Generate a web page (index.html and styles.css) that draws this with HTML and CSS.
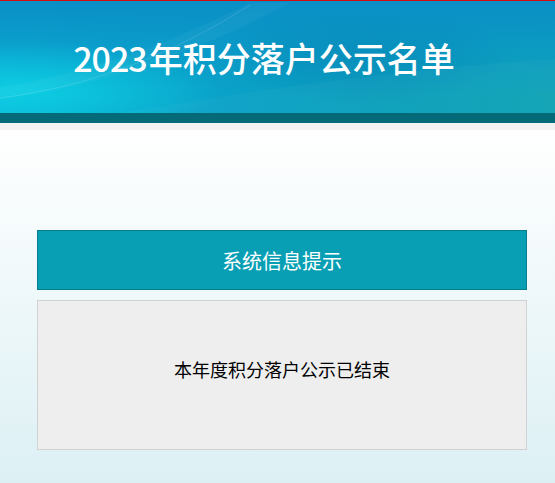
FILE: index.html
```html
<!DOCTYPE html>
<html lang="zh-CN">
<head>
  <meta charset="UTF-8">
  <title>2023年积分落户公示名单</title>
  <link rel="stylesheet" href="styles.css">
</head>
<body>
  <div class="banner">
    <svg class="swoosh" width="555" height="112" viewBox="0 0 555 112" preserveAspectRatio="none">
      <path d="M0 86 C90 72 170 42 250 2 L290 2 C210 44 120 82 0 98 Z" fill="rgba(255,255,255,0.04)"/>
      <path d="M0 97 C90 86 175 52 250 4" stroke="rgba(255,255,255,0.12)" stroke-width="1" fill="none"/>
      <path d="M120 112 C240 92 380 70 555 58 L555 112 Z" fill="rgba(255,255,255,0.03)"/>
    </svg>
    <h1><span class="num">2023</span>年积分落户公示名单</h1>
  </div>
  <div class="banner-bar"></div>
  <div class="banner-gap"></div>

  <div class="main">
    <div class="notice">
      <div class="notice-title">系统信息提示</div>
      <div class="notice-body">本年度积分落户公示已结束</div>
    </div>
  </div>
</body>
</html>
```

FILE: styles.css
```css
html, body {
  height: 100%;
}
body {
  margin: 0;
  font-family: "Noto Sans CJK SC", "Noto Sans", sans-serif;
  background: linear-gradient(to bottom, #ffffff 130px, #dcf0f4 100%);
}
.banner {
  position: relative;
  height: 112px;
  border-top: 1px solid #d80c0c;
  background:
    radial-gradient(ellipse 200px 50px at 20px 90px, rgba(14, 212, 230, 0.8), rgba(14, 212, 230, 0) 100%),
    radial-gradient(ellipse 150px 50px at 360px 55px, rgba(6, 128, 180, 0.45), rgba(6, 128, 180, 0) 100%),
    linear-gradient(to bottom, #0a8fc6 0%, rgba(10, 150, 200, 0.6) 45%, rgba(10, 180, 210, 0) 85%),
    linear-gradient(to right, #0ab4d6 0%, #0aa2c8 40%, #0a9fba 70%, #0ea3b5 100%);
  display: flex;
  align-items: center;
  justify-content: center;
  padding-right: 27px;
  overflow: hidden;
}
.swoosh {
  position: absolute;
  left: 0;
  top: 0;
}
.banner h1 {
  position: relative;
  margin: 0;
  padding-top: 0;
  font-size: 34px;
  font-weight: 500;
  color: #fff;
}
.banner h1 .num {
  letter-spacing: -1px;
  margin-right: 2px;
}
.banner-bar {
  height: 10px;
  background: #046a78;
}
.banner-gap {
  height: 7px;
  background: #f2f2f2;
}
.main {
  padding: 100px 28px 0 37px;
}
.notice {
  width: 490px;
}
.notice-title {
  height: 58px;
  border: 1px solid #077d8d;
  background: #089fb5;
  color: #fff;
  font-size: 20px;
  display: flex;
  align-items: center;
  justify-content: center;
}
.notice-body {
  margin-top: 10px;
  height: 136px;
  padding-bottom: 12px;
  border: 1px solid #d2d2d2;
  background: #eeeeee;
  color: #000;
  font-size: 18px;
  display: flex;
  align-items: center;
  justify-content: center;
}
```
